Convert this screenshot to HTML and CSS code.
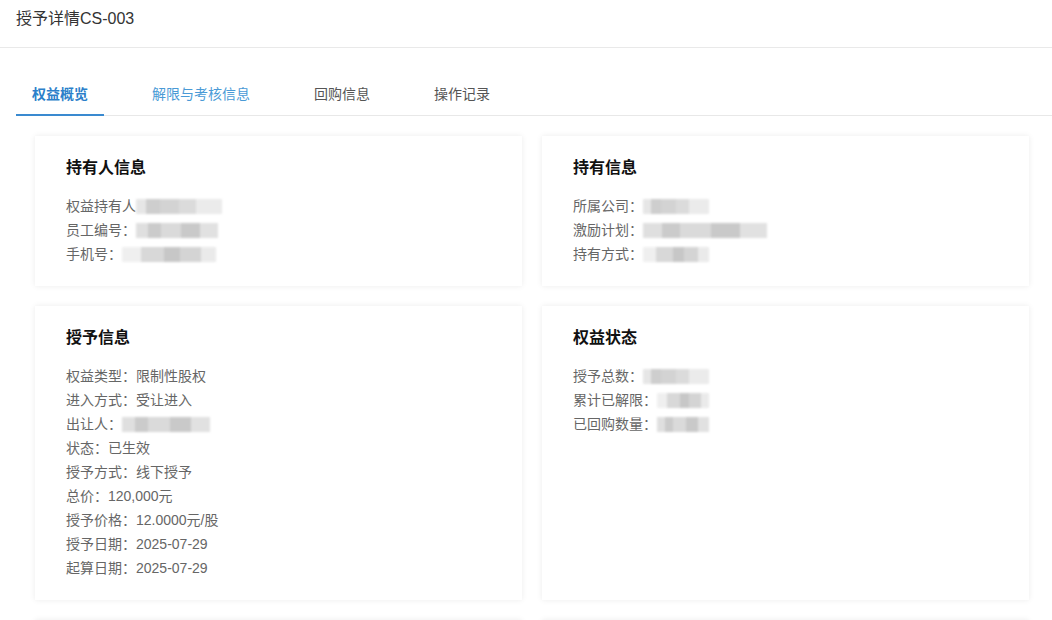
FILE: index.html
```html
<!DOCTYPE html>
<html lang="zh">
<head>
<meta charset="utf-8">
<title>授予详情</title>
<link rel="stylesheet" href="styles.css">
</head>
<body>
<div class="page">
  <header class="page-header">授予详情CS-003</header>
  <nav class="tabs">
    <div class="tab active">权益概览</div>
    <div class="tab hover">解限与考核信息</div>
    <div class="tab">回购信息</div>
    <div class="tab">操作记录</div>
  </nav>
  <main class="cards">
    <section class="card">
      <h3 class="card-title">持有人信息</h3>
      <div class="rows">
        <div class="row">权益持有人<span class="mask w86 p1"></span></div>
        <div class="row">员工编号：<span class="mask w82 p2"></span></div>
        <div class="row">手机号：<span class="mask w94 p3"></span></div>
      </div>
    </section>
    <section class="card">
      <h3 class="card-title">持有信息</h3>
      <div class="rows">
        <div class="row">所属公司：<span class="mask w66 p1"></span></div>
        <div class="row">激励计划：<span class="mask w124 p2"></span></div>
        <div class="row">持有方式：<span class="mask w66 p3"></span></div>
      </div>
    </section>
    <section class="card">
      <h3 class="card-title">授予信息</h3>
      <div class="rows">
        <div class="row">权益类型：限制性股权</div>
        <div class="row">进入方式：受让进入</div>
        <div class="row">出让人：<span class="mask w88 p2"></span></div>
        <div class="row">状态：已生效</div>
        <div class="row">授予方式：线下授予</div>
        <div class="row">总价：120,000元</div>
        <div class="row">授予价格：12.0000元/股</div>
        <div class="row">授予日期：2025-07-29</div>
        <div class="row">起算日期：2025-07-29</div>
      </div>
    </section>
    <section class="card">
      <h3 class="card-title">权益状态</h3>
      <div class="rows">
        <div class="row">授予总数：<span class="mask w66 p1"></span></div>
        <div class="row">累计已解限：<span class="mask w52 p3"></span></div>
        <div class="row">已回购数量：<span class="mask w52 p2"></span></div>
      </div>
    </section>
    <section class="card card-next"></section>
    <section class="card card-next"></section>
  </main>
</div>
</body>
</html>
```

FILE: styles.css
```css
* { box-sizing: border-box; }
html, body { margin: 0; padding: 0; background: #fff; }
body {
  font-family: "Liberation Sans", "Noto Sans CJK SC", sans-serif;
  color: #333;
  overflow: hidden;
  height: 620px;
}
.page { width: 1052px; }
.page-header {
  height: 48px;
  padding: 8px 16px 0;
  font-size: 16px;
  line-height: 22px;
  color: #333;
  border-bottom: 1px solid #e9e9e9;
}
.tabs {
  display: flex;
  gap: 32px;
  margin: 27px 0 0 16px;
  height: 41px;
  border-bottom: 1px solid #e8e8e8;
}
.tab {
  padding: 0 16px;
  font-size: 14px;
  line-height: 38px;
  color: #555;
  height: 41px;
  margin-bottom: -1px;
}
.tab.active {
  color: #2b7fca;
  font-weight: bold;
  border-bottom: 2px solid #3a8ad0;
}
.tab.hover { color: #4a9ad6; }
.cards {
  display: grid;
  grid-template-columns: 487px 487px;
  column-gap: 20px;
  row-gap: 20px;
  padding: 20px 0 0 35px;
}
.card {
  background: #fff;
  box-shadow: 0 0 6px rgba(0, 0, 0, 0.08);
  padding: 20px 30px 20px 31px;
}
.card-next { height: 80px; }
.card-title {
  margin: 0;
  font-size: 16px;
  line-height: 24px;
  font-weight: bold;
  color: #111;
}
.rows { margin-top: 14px; }
.row {
  font-size: 14px;
  line-height: 24px;
  color: #666;
  display: flex;
  align-items: center;
}
.mask {
  display: inline-block;
  height: 15px;
  filter: blur(1.2px);
  opacity: 0.9;
}
.w52 { width: 52px; }
.w66 { width: 66px; }
.w82 { width: 82px; }
.w86 { width: 86px; }
.w88 { width: 88px; }
.w94 { width: 94px; }
.w124 { width: 124px; }
.p1 {
  background: linear-gradient(90deg, #e4e4e4 0 12%, #c9c9c9 12% 28%, #cfcfcf 28% 50%, #d8d8d8 50% 70%, #e9e9e9 70% 100%);
}
.p2 {
  background: linear-gradient(90deg, #dcdcdc 0 15%, #c6c6c6 15% 30%, #d6d6d6 30% 55%, #c4c4c4 55% 78%, #dedede 78% 100%);
}
.p3 {
  background: linear-gradient(90deg, #eeeeee 0 20%, #d4d4d4 20% 45%, #c2c2c2 45% 62%, #d0d0d0 62% 84%, #e8e8e8 84% 100%);
}
```
